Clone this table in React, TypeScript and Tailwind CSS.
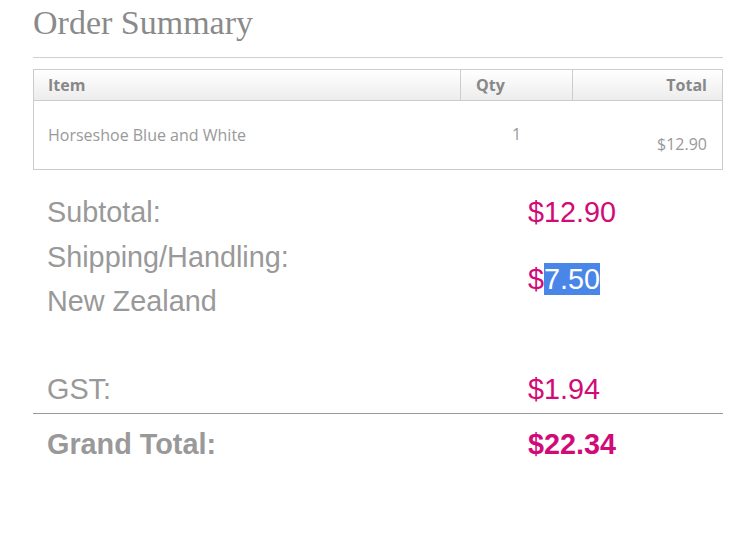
import React from "react";

const sans = { fontFamily: "'Liberation Sans', Arial, sans-serif" };

export default function App() {
  return (
    <div className="w-[749px] h-[553px] bg-white overflow-hidden">
      <div className="ml-[33px] w-[690px]">
        {/* Heading */}
        <h1 className="font-['Liberation_Serif',serif] text-[34px] leading-[46px] text-[#8a8a8a]">
          Order Summary
        </h1>
        <div className="mt-[11px] border-t border-[#cfcfcf]" />

        {/* Items table */}
        <table className="mt-[11px] w-full border border-[#cccccc] border-collapse font-['Open_Sans',sans-serif] text-[16px]">
          <thead>
            <tr className="h-[31px] bg-gradient-to-b from-white to-[#ececec] text-[#888] font-bold">
              <th className="text-left pl-[14px] border-b border-[#cccccc] font-bold">Item</th>
              <th className="w-[112px] text-left pl-[15px] border-l border-b border-[#cccccc] font-bold">Qty</th>
              <th className="w-[150px] text-right pr-[15px] border-l border-b border-[#cccccc] font-bold">Total</th>
            </tr>
          </thead>
          <tbody>
            <tr className="h-[69px] text-[#999]">
              <td className="pl-[14px] align-top pt-[22px]">Horseshoe Blue and White</td>
              <td className="text-center align-top pt-[21px]">1</td>
              <td className="text-right pr-[15px] align-top pt-[31px]">$12.90</td>
            </tr>
          </tbody>
        </table>

        {/* Totals */}
        <div style={sans} className="mt-[20px] text-[28.8px] leading-[44px]">
          <div className="grid grid-cols-[495px_1fr] text-[#999]">
            <div className="pl-[14px]">Subtotal:</div>
            <div className="text-[#d10a78]">$12.90</div>
          </div>
          <div className="grid grid-cols-[495px_1fr] items-center mt-[1px]">
            <div className="pl-[14px] text-[#999]">
              <div>Shipping/Handling:</div>
              <div>New Zealand</div>
            </div>
            <div className="text-[#d10a78]">
              $<span className="bg-[#4a86e8] text-white">7.50</span>
            </div>
          </div>
          <div className="grid grid-cols-[495px_1fr] mt-[44px] pb-[2px]">
            <div className="pl-[14px] text-[#999]">GST:</div>
            <div className="text-[#d10a78]">$1.94</div>
          </div>
          <div className="border-t border-[#999]" />
          <div className="grid grid-cols-[495px_1fr] font-bold pt-[8px]">
            <div className="pl-[14px] text-[#999]">Grand Total:</div>
            <div className="text-[#d10a78]">$22.34</div>
          </div>
        </div>
      </div>
    </div>
  );
}
